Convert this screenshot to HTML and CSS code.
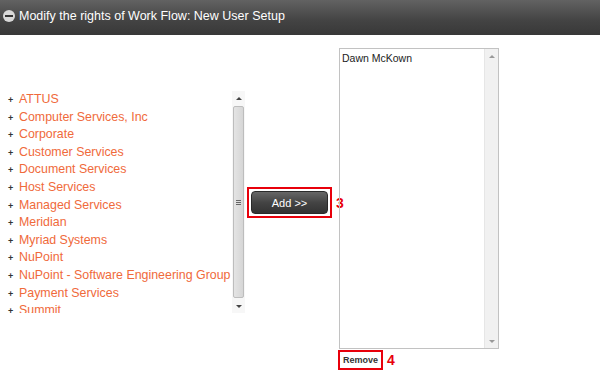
FILE: index.html
```html
<!DOCTYPE html>
<html lang="en">
<head>
    <meta charset="UTF-8">
    <title>Modify the rights of Work Flow</title>
    <link rel="stylesheet" href="styles.css">
</head>
<body>
    <!-- Barra de titulo -->
    <header class="title-bar">
        <span class="collapse-icon"></span>
        <h1>Modify the rights of Work Flow: New User Setup</h1>
    </header>

    <div class="picker">
        <!-- Arbol de grupos -->
        <div class="tree-box">
            <ul class="tree">
                <li><span class="plus">+</span><a href="#">ATTUS</a></li>
                <li><span class="plus">+</span><a href="#">Computer Services, Inc</a></li>
                <li><span class="plus">+</span><a href="#">Corporate</a></li>
                <li><span class="plus">+</span><a href="#">Customer Services</a></li>
                <li><span class="plus">+</span><a href="#">Document Services</a></li>
                <li><span class="plus">+</span><a href="#">Host Services</a></li>
                <li><span class="plus">+</span><a href="#">Managed Services</a></li>
                <li><span class="plus">+</span><a href="#">Meridian</a></li>
                <li><span class="plus">+</span><a href="#">Myriad Systems</a></li>
                <li><span class="plus">+</span><a href="#">NuPoint</a></li>
                <li><span class="plus">+</span><a href="#">NuPoint - Software Engineering Group</a></li>
                <li><span class="plus">+</span><a href="#">Payment Services</a></li>
                <li><span class="plus">+</span><a href="#">Summit</a></li>
            </ul>
            <div class="scrollbar">
                <span class="arrow up"></span>
                <span class="thumb"><span class="grip"></span></span>
                <span class="arrow down"></span>
            </div>
        </div>

        <!-- Boton agregar -->
        <div class="middle">
            <div class="callout">
                <button class="add-btn">Add &gt;&gt;</button>
            </div>
            <span class="step">3</span>
        </div>

        <!-- Usuarios seleccionados -->
        <div class="right">
            <div class="picked">
                <div class="picked-list">
                    <div>Dawn McKown</div>
                </div>
                <div class="scrollbar light">
                    <span class="arrow up"></span>
                    <span class="track"></span>
                    <span class="arrow down"></span>
                </div>
            </div>
            <div class="remove-row">
                <div class="callout small">
                    <button class="remove-btn">Remove</button>
                </div>
                <span class="step">4</span>
            </div>
        </div>
    </div>
</body>
</html>
```

FILE: styles.css
```css
body {
    margin: 0;
    font-family: "Liberation Sans", Arial, sans-serif;
    background: #fff;
}

/* Barra de titulo */
.title-bar {
    height: 35px;
    display: flex;
    align-items: center;
    padding: 0 0 3px 3px;
    box-sizing: border-box;
    background: linear-gradient(180deg, #626262, #434343 60%, #383838);
}
.title-bar h1 {
    margin: 0 0 0 4px;
    font-size: 12.5px;
    font-weight: normal;
    color: #fff;
}
.collapse-icon {
    width: 12px;
    height: 12px;
    border-radius: 50%;
    background: #d8d8d8;
    display: flex;
    align-items: center;
    justify-content: center;
}
.collapse-icon::after {
    content: "";
    width: 8px;
    height: 2px;
    background: #333;
}

.picker {
    display: flex;
    align-items: flex-start;
}

/* Arbol */
.tree-box {
    width: 245px;
    height: 222px;
    margin-top: 56px;
    display: flex;
    overflow: hidden;
}
.tree {
    flex: 1;
    list-style: none;
    margin: 0;
    padding: 0 0 0 8px;
    white-space: nowrap;
    overflow: hidden;
}
.tree li {
    height: 17.6px;
    line-height: 17.6px;
    font-size: 12.4px;
}
.tree a {
    color: #f06a3b;
    text-decoration: none;
}
.plus {
    display: inline-block;
    width: 11px;
    font-size: 9px;
    font-weight: bold;
    color: #333;
}

/* Barra de desplazamiento */
.scrollbar {
    width: 13px;
    display: flex;
    flex-direction: column;
    align-items: center;
    background: #f7f7f7;
}
.arrow {
    height: 14px;
    width: 13px;
    display: flex;
    align-items: center;
    justify-content: center;
}
.arrow::after {
    content: "";
    border-left: 3px solid transparent;
    border-right: 3px solid transparent;
}
.arrow.up::after {
    border-bottom: 3px solid #444;
}
.arrow.down::after {
    border-top: 3px solid #444;
}
.thumb {
    flex: 1;
    width: 11px;
    margin: 1px 0;
    border: 1px solid #bdbdbd;
    border-radius: 2px;
    box-sizing: border-box;
    background: linear-gradient(90deg, #e4e4e4, #d6d6d6);
    display: flex;
    align-items: center;
    justify-content: center;
}
.grip {
    width: 5px;
    height: 5px;
    border-top: 1px solid #666;
    border-bottom: 1px solid #666;
    box-sizing: border-box;
    position: relative;
}
.grip::after {
    content: "";
    position: absolute;
    left: 0;
    right: 0;
    top: 1px;
    border-top: 1px solid #666;
}
.track {
    flex: 1;
}

/* Boton agregar */
.middle {
    width: 94px;
    margin-top: 152px;
    display: flex;
    align-items: center;
}
.callout {
    border: 2px solid #e8000b;
    padding: 2px 2px;
    margin-left: 2px;
}
.add-btn {
    display: block;
    width: 77px;
    height: 23px;
    border: 1px solid #2a2a2a;
    border-radius: 4px;
    background: linear-gradient(180deg, #666, #444 50%, #333);
    color: #fff;
    font-family: "Liberation Sans", Arial, sans-serif;
    font-size: 11px;
    padding: 0;
}
.step {
    margin-left: 4px;
    color: #e8000b;
    font-size: 14px;
    font-weight: bold;
}

/* Lista derecha */
.right {
    margin-top: 13px;
}
.picked {
    width: 160px;
    height: 301px;
    border: 1px solid #c2c2c2;
    box-sizing: border-box;
    display: flex;
}
.picked-list {
    flex: 1;
    padding: 3px 2px;
    font-size: 10.5px;
    color: #222;
}
.scrollbar.light {
    background: #f1f1f1;
    border-left: 1px solid #e6e6e6;
}
.scrollbar.light .arrow::after {
    border-bottom-color: #999;
    border-top-color: #999;
}
.remove-row {
    display: flex;
    align-items: center;
    height: 21px;
}
.callout.small {
    margin-left: -1px;
    padding: 0 3px;
}
.remove-btn {
    display: block;
    border: none;
    background: none;
    padding: 0;
    height: 16px;
    font-family: "Liberation Sans", Arial, sans-serif;
    font-size: 9px;
    font-weight: bold;
    color: #333;
}
```
